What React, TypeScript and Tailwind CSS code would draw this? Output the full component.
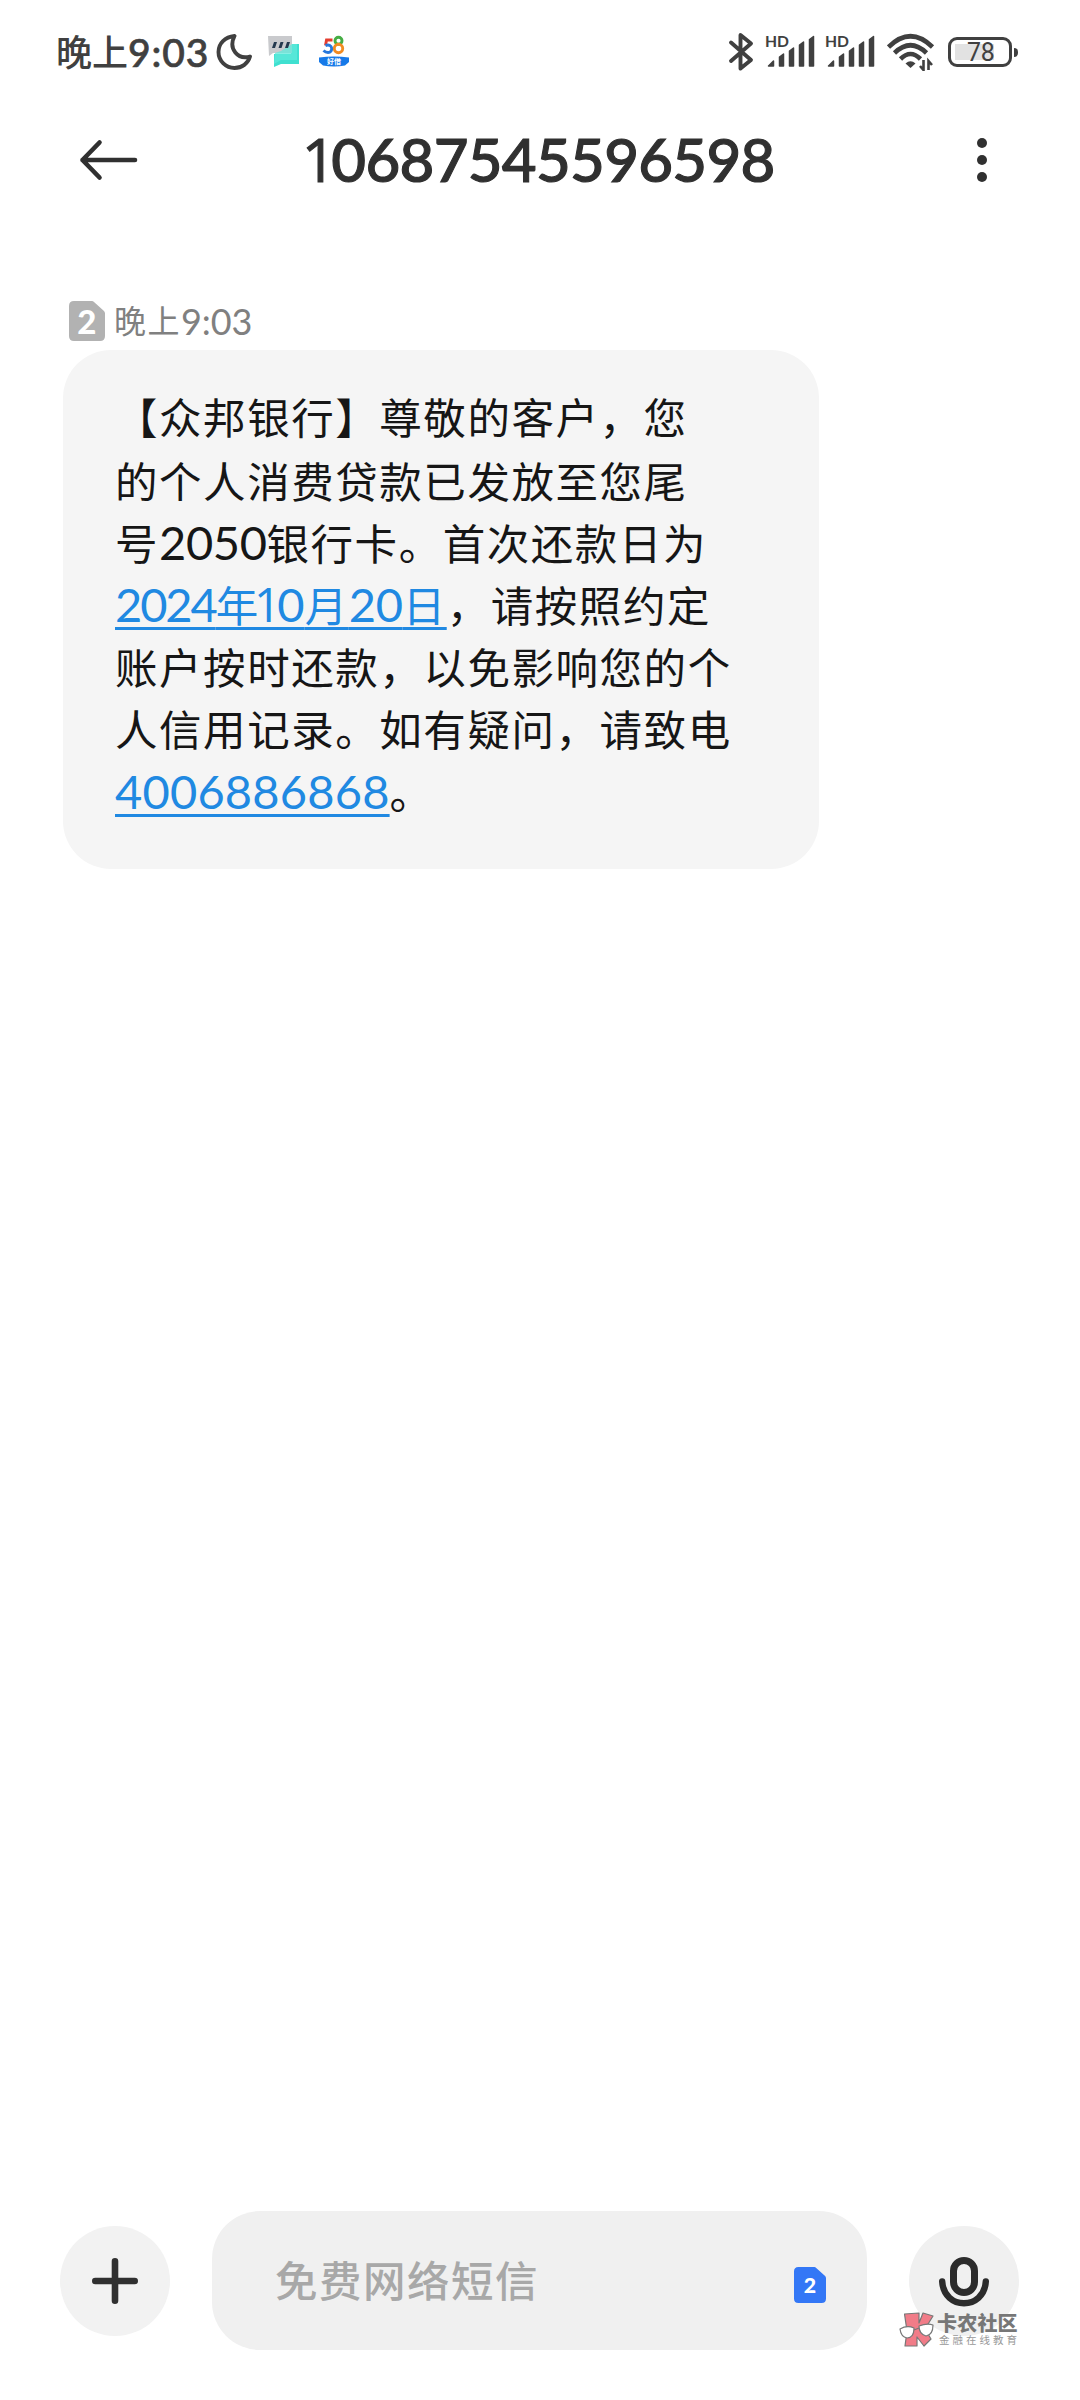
import React from "react";

const FONT = "font-['Lato','Noto_Sans_CJK_SC',sans-serif]";

/** Digits set in Lato, with a plain narrow stroke for the figure one. */
function Num({ value }: { value: string }) {
  return (
    <>
      {value.split(/(1)/).map((part, i) =>
        part === "1" ? (
          <span key={i} className="-ml-[0.120em] -mr-[0.060em] font-['Open_Sans','Noto_Sans',sans-serif] tracking-[-0.020em]">1</span>
        ) : (
          part
        ),
      )}
    </>
  );
}

function Signal() {
  return (
    <svg className="overflow-visible" width="52" height="36" viewBox="0 0 52 36" fill="#404040">
      <text x="0" y="13" fontSize="16" fontWeight="700" fontFamily="Lato, sans-serif" textLength="24" lengthAdjust="spacingAndGlyphs">HD</text>
      <g stroke="#404040" strokeWidth="1.5" strokeLinejoin="round">
        <path d="M3.500 32 L8.500 27 V32 Z" />
        <path d="M14.500 32 V23 L18.500 20 V32 Z" />
        <path d="M24.500 32 V17 L28.500 14 V32 Z" />
        <path d="M34.500 32 V11 L38.500 8 V32 Z" />
        <path d="M44.500 32 V5.500 L48.500 2.500 V32 Z" />
      </g>
    </svg>
  );
}

function StatusBar() {
  return (
    <header className="flex h-[104px] items-center pl-[56px] pr-[62px] text-[#404040]">
      <div className={`${FONT} flex h-[52px] w-[153px] items-center whitespace-nowrap font-medium leading-[52px]`}>
        <span className="text-[36px]">晚上</span>
        <span className="text-[39px] tracking-[0.900px] [-webkit-text-stroke:0.700px_#404040]">9:03</span>
      </div>
      <svg className="ml-[7px]" width="36" height="36" viewBox="0 0 36 36" fill="none" stroke="#404040" strokeWidth="3.900" strokeLinejoin="round">
        <path d="M18.500 2 C9 3 2.500 9.500 2.500 18 C2.500 27 10 34 18.500 34 C26 34 32 29.500 34 22.500 C22 26 12 15 18.500 2 Z" />
      </svg>
      <svg className="ml-[15px]" width="34" height="34" viewBox="0 0 34 34">
        <path d="M24 9 H32 V29 H14 L7 32 V19 H24 Z" fill="#3fe0d0" />
        <path d="M1 1 H25 V18 H6 L2 21 Z" fill="#c9cacd" />
        <path d="M8 18 L14 16 L25 9 H30 V25 H14 L7 29 Z" fill="#5feadb" opacity=".75" />
        <path d="M7 7 H10 L8 13 H5 Z M13.500 7 H16.500 L14.500 13 H11.500 Z M20 7 H23 L21 13 H18 Z" fill="#24394e" />
      </svg>
      <svg className="ml-[17px]" width="32" height="34" viewBox="0 0 32 34">
        <g fill="none" strokeWidth="2.900">
          <path d="M14.500 5 H8.500 L7.500 10.500" stroke="#e43d30" />
          <path d="M7.500 10.500 C15 8 15.500 17.500 10 17.500 C8 17.500 6.500 16.500 5.500 15.500" stroke="#2778dc" />
          <circle cx="20.500" cy="5.800" r="3.500" stroke="#46ad45" />
          <circle cx="20.500" cy="13.500" r="4.200" stroke="#f28b22" />
        </g>
        <path d="M1 22.500 Q16 20.500 31 22.500 V27 L27 30.500 Q16 32.500 5 30.500 L1 27 Z" fill="#1679e8" />
        <text x="9" y="29.200" fontSize="7" fontWeight="700" fill="white" fontFamily="Noto Sans CJK SC, sans-serif" textLength="14">好借</text>
      </svg>
      <div className="ml-auto flex items-center">
        <svg width="26" height="40" viewBox="0 0 26 40" fill="none" stroke="#404040" strokeWidth="3.900" strokeLinecap="round" strokeLinejoin="round">
          <path d="M3 10.500 L23 28 L12.500 36.500 V3 L23 11.500 L3 29" />
        </svg>
        <div className="ml-[11px] flex gap-[8px]"><Signal /><Signal /></div>
        <svg className="ml-[10px]" width="48" height="38" viewBox="0 0 48 38" fill="none" stroke="#404040" strokeWidth="4.600">
          <path d="M1.500 14 Q23.500 -7.500 45.500 14" />
          <path d="M7.500 20 Q23.500 4.500 39.500 20" />
          <path d="M13.500 26 Q23.500 16 33.500 26" />
          <path d="M18.500 30.500 Q23.500 26 28.500 30.500 L23.500 35 Z" fill="#404040" stroke="none" />
          <path d="M36.500 27 V37 L33 33 M41.500 37 V28 L45 32" strokeWidth="2.600" />
        </svg>
        <div className="ml-[13px] flex h-[30px] w-[64px] items-center rounded-[9px] border-[3px] border-[#404040] p-[4px]">
          <div className="flex h-full w-[39px] items-center justify-start bg-[#e2e2e2]">
            <span className="ml-[12px] font-['Roboto',sans-serif] text-[25px] leading-none tracking-[-0.300px]">78</span>
          </div>
        </div>
        <div className="ml-[2px] h-[9px] w-[4px] rounded-r bg-[#404040]" />
      </div>
    </header>
  );
}

function SimBadge({ width, height, fill, size, baseline }: { width: number; height: number; fill: string; size: number; baseline: number }) {
  return (
    <svg width={width} height={height} viewBox="0 0 36 40" preserveAspectRatio="none">
      <path d="M5 0 H23 Q24 0 25 1 L35 10 Q36 11 36 12.500 V35 Q36 40 31 40 H5 Q0 40 0 35 V5 Q0 0 5 0 Z" fill={fill} />
      <text x="17.800" y={baseline} textAnchor="middle" fontSize={size} fontWeight="900" fontFamily="Lato, sans-serif" fill="white">2</text>
    </svg>
  );
}

function Link({ children }: { children: React.ReactNode }) {
  return (
    <span className="text-[#2089e2] underline decoration-[2.500px] underline-offset-[5px]">{children}</span>
  );
}

function D({ children, className = "tracking-[0.200px]" }: { children: string; className?: string }) {
  return <span className={`text-[47px] ${className}`}><Num value={children} /></span>;
}

export default function App() {
  return (
    <div className={`${FONT} flex h-[2400px] w-[1080px] flex-col overflow-hidden bg-white`}>
      <StatusBar />
      <div className="flex h-[112px] items-center pl-[79px]">
        <svg width="59" height="42" viewBox="0 0 59 42" fill="none" stroke="#303030" strokeWidth="4.600" strokeLinecap="round" strokeLinejoin="round">
          <path d="M20.500 3.500 L3.500 21 L20.500 38.500 M3.500 21 H56" />
        </svg>
        <h1 className="-mt-[2px] ml-[171px] w-[668px] whitespace-nowrap text-[60px] font-medium leading-[70px] tracking-[-0.700px] text-[#303030] [-webkit-text-stroke:1.100px_#303030]"><Num value="10687545596598" /></h1>
        <div className="flex w-[10px] flex-col gap-[7px]">
          <div className="size-[10px] rounded-full bg-[#303030]" />
          <div className="size-[10px] rounded-full bg-[#303030]" />
          <div className="size-[10px] rounded-full bg-[#303030]" />
        </div>
      </div>

      <main className="flex flex-1 flex-col items-start pl-[63px] pt-[85px]">
        <div className="flex h-[49px] w-full items-start pl-[6px]">
          <SimBadge width={36} height={40} fill="#b2b2b2" size={33} baseline={32.5} />
          <div className="ml-[9px] flex h-[39px] items-center whitespace-nowrap text-[#808080]">
            <span className="text-[32px] tracking-[1.500px]">晚上</span>
            <span className="text-[36px] tracking-[-0.100px]">9:03</span>
          </div>
        </div>
        <section className="h-[519px] w-[756px] rounded-[48px] bg-[#f5f5f5] pl-[52px] pt-[37px] text-[42.500px] tracking-[1.550px] text-[#161616]">
          <p className="h-[63.500px] whitespace-nowrap leading-[62px]">【众邦银行】尊敬的客户，您</p>
          <p className="h-[61.800px] whitespace-nowrap leading-[62px]">的个人消费贷款已发放至您尾</p>
          <p className="h-[62px] whitespace-nowrap leading-[61px]">号<D className="tracking-[-0.400px]">2050</D>银行卡。首次还款日为</p>
          <p className="h-[62.500px] whitespace-nowrap leading-[61px]"><Link><D className="tracking-[-2.100px]">2024</D>年<D>10</D>月<D className="tracking-[-0.300px]">20</D>日</Link>，请按照约定</p>
          <p className="h-[62.300px] whitespace-nowrap leading-[62px]">账户按时还款，以免影响您的个</p>
          <p className="h-[62.300px] whitespace-nowrap leading-[61px]">人信用记录。如有疑问，请致电</p>
          <p className="h-[62.300px] whitespace-nowrap leading-[60px]"><Link><D>4006886868</D></Link>。</p>
        </section>
      </main>

      <footer className="relative flex h-[189px] items-start pl-[60px] pr-[61px]">
        <button className="mt-[15px] flex size-[110px] items-center justify-center rounded-full bg-[#f2f2f2]">
          <svg width="46" height="46" viewBox="0 0 46 46" stroke="#303030" strokeWidth="6.600" strokeLinecap="round">
            <path d="M23 3.300 V42.700 M3.300 23 H42.700" />
          </svg>
        </button>
        <div className="ml-[42px] flex h-[139px] w-[655px] items-center rounded-[48px] bg-[#f0f0f0] pl-[63px] pr-[41px]">
          <span className="mt-[1px] whitespace-nowrap text-[42.500px] font-medium tracking-[1.500px] text-[#a8a8a8]">免费网络短信</span>
          <div className="ml-auto mt-[8px]"><SimBadge width={32} height={36} fill="#3377f6" size={24} baseline={29} /></div>
        </div>
        <button className="ml-auto mt-[15px] flex size-[110px] justify-center rounded-full bg-[#f0f0f0] pt-[31px]">
          <svg width="50" height="51" viewBox="0 0 50 51" fill="none" stroke="#2c2c2c" strokeLinecap="round">
            <rect x="14.500" y="3.500" width="21" height="32" rx="10.500" strokeWidth="7" />
            <path d="M3.200 24.500 C5 53.500 45 53.500 46.800 24.500" strokeWidth="6.400" />
          </svg>
        </button>
        <div className="absolute left-[899px] top-[101px] flex">
          <svg width="36" height="36" viewBox="0 0 36 36" stroke="#777" strokeWidth="1.200" strokeLinejoin="round">
            <path d="M5.500 2 L20 1 V11 L24 1 L34 4 L26 17 L32 27 L25 34 L18 25 V34 L6 34 L8 19 Z" fill="#f17c88" />
            <path d="M1 17 Q8 13 15 16 Q15 26 8 26 Q2 25 1 17 Z M20 14 Q28 11 34 13 Q34 23 27 24 Q20 22 20 14 Z M15 18 L20 16" fill="white" />
          </svg>
          <div className="ml-[2px] flex flex-col whitespace-nowrap">
            <span className="text-[20px] font-black leading-[22px] tracking-[0.200px] text-[#777]">卡农社区</span>
            <span className="pl-[2px] text-[10.500px] leading-[13px] tracking-[3px] text-[#999]">金融在线教育</span>
          </div>
        </div>
      </footer>
    </div>
  );
}
